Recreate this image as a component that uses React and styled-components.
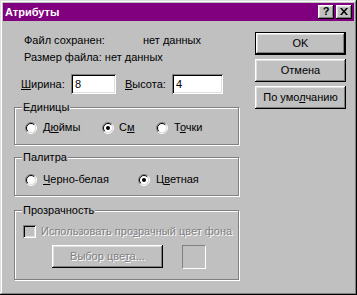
import React from "react";
import styled, { createGlobalStyle } from "styled-components";

const GlobalStyle = createGlobalStyle`
  html, body {
    margin: 0;
    padding: 0;
    background: #c0c0c0;
  }
`;

const raised = `
  box-shadow: inset -1px -1px #000, inset 1px 1px #fff,
    inset -2px -2px #808080, inset 2px 2px #dfdfdf;
`;

const Window = styled.div`
  box-sizing: border-box;
  width: 357px;
  height: 295px;
  padding: 3px;
  background: #c0c0c0;
  box-shadow: inset -1px -1px #000, inset 1px 1px #dfdfdf,
    inset -2px -2px #808080, inset 2px 2px #fff;
  display: flex;
  flex-direction: column;
  color: #000;
  font-family: "Liberation Sans", Arial, sans-serif;
  font-size: 11px;
  line-height: 13px;
`;

const TitleBar = styled.div`
  height: 18px;
  background: #800080;
  display: flex;
  align-items: center;
  gap: 2px;
  padding: 0 2px;
`;

const Title = styled.div`
  flex: 1;
  color: #fff;
  font-weight: bold;
`;

const CaptionButton = styled.div`
  box-sizing: border-box;
  width: 16px;
  height: 14px;
  background: #c0c0c0;
  ${raised}
  display: flex;
  align-items: center;
  justify-content: center;
  font-weight: bold;
  font-size: 11px;
  padding-bottom: 1px;
`;

const Body = styled.div`
  flex: 1;
  display: flex;
`;

const LeftCol = styled.div`
  width: 226px;
  margin-left: 11px;
  padding-top: 13px;
  display: flex;
  flex-direction: column;
`;

const RightCol = styled.div`
  width: 91px;
  margin-left: auto;
  margin-right: 8px;
  padding-top: 11px;
  display: flex;
  flex-direction: column;
  gap: 4px;
`;

const InfoRow = styled.div`
  display: flex;
  height: 13px;
  padding-left: 10px;
  margin-top: ${(p) => p.$top || 0}px;
  white-space: nowrap;
`;

const InfoLabel = styled.span`
  width: 119px;
`;

const SizeRow = styled.div`
  display: flex;
  align-items: center;
  height: 20px;
  margin-top: 10px;
  padding-left: 7px;
`;

const FieldLabel = styled.span`
  width: ${(p) => p.$w}px;
  margin-left: ${(p) => p.$ml || 0}px;
`;

const TextBox = styled.div`
  box-sizing: border-box;
  width: ${(p) => p.$w}px;
  height: 20px;
  padding-left: 4px;
  background: #fff;
  display: flex;
  align-items: center;
  box-shadow: inset 1px 1px #808080, inset -1px -1px #fff,
    inset 2px 2px #000, inset -2px -2px #dfdfdf;
`;

const Hot = styled.span`
  text-decoration: underline;
  text-underline-offset: 1px;
`;

const Group = styled.div`
  box-sizing: border-box;
  width: 225px;
  height: ${(p) => p.$h}px;
  margin-top: ${(p) => p.$top}px;
  border: 1px solid #808080;
  box-shadow: inset 1px 1px #fff, 1px 1px #fff;
  display: flex;
  flex-direction: column;
`;

const Legend = styled.span`
  align-self: flex-start;
  margin: -7px 0 0 7px;
  padding: 0 1px;
  background: #c0c0c0;
  line-height: 13px;
`;

const OptionRow = styled.div`
  display: flex;
  align-items: center;
  height: 13px;
  margin-top: ${(p) => p.$top}px;
  padding-left: ${(p) => p.$left || 10}px;
  white-space: nowrap;
`;

const Option = styled.label`
  display: flex;
  align-items: center;
  gap: ${(p) => p.$gap || 6}px;
  width: ${(p) => (p.$w ? `${p.$w}px` : "auto")};
  color: ${(p) => (p.$disabled ? "#808080" : "#000")};
  text-shadow: ${(p) => (p.$disabled ? "1px 1px 0 #fff" : "none")};
`;

const CheckBox = styled.span`
  box-sizing: border-box;
  width: 13px;
  height: 13px;
  background: #c0c0c0;
  box-shadow: inset 1px 1px #808080, inset -1px -1px #fff,
    inset 2px 2px #000, inset -2px -2px #dfdfdf;
`;

const ButtonRow = styled.div`
  display: flex;
  align-items: flex-start;
  gap: 19px;
  margin-top: 7px;
  padding-left: 37px;
`;

const Button = styled.div`
  box-sizing: border-box;
  width: ${(p) => p.$w || 91}px;
  height: 23px;
  background: #c0c0c0;
  display: flex;
  align-items: center;
  justify-content: center;
  white-space: nowrap;
  border: ${(p) => (p.$default ? "1px solid #000" : "none")};
  ${raised}
  color: ${(p) => (p.$disabled ? "#808080" : "#000")};
  text-shadow: ${(p) => (p.$disabled ? "1px 1px 0 #fff" : "none")};
`;

const ColorWell = styled.div`
  box-sizing: border-box;
  width: 24px;
  height: 24px;
  border: 1px solid;
  border-color: #808080 #fff #fff #808080;
`;

const Radio = ({ checked }) => (
  <svg width="12" height="12" viewBox="0 0 12 12">
    <circle cx="6" cy="6" r="4.5" fill="#fff" />
    <path d="M2.1 9.9 A5.5 5.5 0 0 1 9.9 2.1" fill="none" stroke="#808080" />
    <path d="M9.9 2.1 A5.5 5.5 0 0 1 2.1 9.9" fill="none" stroke="#fff" />
    <path d="M2.8 9.2 A4.5 4.5 0 0 1 9.2 2.8" fill="none" stroke="#000" />
    <path d="M9.2 2.8 A4.5 4.5 0 0 1 2.8 9.2" fill="none" stroke="#dfdfdf" />
    {checked && <circle cx="6" cy="6" r="2" fill="#000" />}
  </svg>
);

const CloseGlyph = () => (
  <svg width="8" height="7" viewBox="0 0 8 7">
    <path d="M0 0h2l2 2.5L6 0h2L5 3.5 8 7H6L4 4.5 2 7H0l3-3.5z" fill="#000" />
  </svg>
);

export default function App() {
  return (
    <>
      <GlobalStyle />
      <Window>
        <TitleBar>
          <Title>Атрибуты</Title>
          <CaptionButton>?</CaptionButton>
          <CaptionButton>
            <CloseGlyph />
          </CaptionButton>
        </TitleBar>
        <Body>
          <LeftCol>
            <InfoRow>
              <InfoLabel>Файл сохранен:</InfoLabel>
              <span>нет данных</span>
            </InfoRow>
            <InfoRow $top={4}>Размер файла: нет данных</InfoRow>
            <SizeRow>
              <FieldLabel $w={50}>
                <Hot>Ш</Hot>ирина:
              </FieldLabel>
              <TextBox $w={45}>8</TextBox>
              <FieldLabel $w={47} $ml={9}>
                <Hot>В</Hot>ысота:
              </FieldLabel>
              <TextBox $w={51}>4</TextBox>
            </SizeRow>

            <Group $h={38} $top={13}>
              <Legend>Единицы</Legend>
              <OptionRow $top={7}>
                <Option $w={77}>
                  <Radio />
                  <span>
                    Д<Hot>ю</Hot>ймы
                  </span>
                </Option>
                <Option $w={54} $gap={5}>
                  <Radio checked />
                  <span>
                    С<Hot>м</Hot>
                  </span>
                </Option>
                <Option>
                  <Radio />
                  <span>
                    Т<Hot>о</Hot>чки
                  </span>
                </Option>
              </OptionRow>
            </Group>

            <Group $h={39} $top={12}>
              <Legend>Палитра</Legend>
              <OptionRow $top={9}>
                <Option $w={113}>
                  <Radio />
                  <span>
                    <Hot>Ч</Hot>ерно-белая
                  </span>
                </Option>
                <Option>
                  <Radio checked />
                  <span>
                    Ц<Hot>в</Hot>етная
                  </span>
                </Option>
              </OptionRow>
            </Group>

            <Group $h={70} $top={14}>
              <Legend>Прозрачность</Legend>
              <OptionRow $top={8} $left={8}>
                <Option $gap={5} $disabled>
                  <CheckBox />
                  <span>
                    Использовать про<Hot>з</Hot>рачный цвет фона
                  </span>
                </Option>
              </OptionRow>
              <ButtonRow>
                <Button $w={111} $disabled>
                  <span>
                    Выбор цве<Hot>т</Hot>а...
                  </span>
                </Button>
                <ColorWell />
              </ButtonRow>
            </Group>
          </LeftCol>

          <RightCol>
            <Button $default>OK</Button>
            <Button>Отмена</Button>
            <Button>
              <span>
                По умо<Hot>л</Hot>чанию
              </span>
            </Button>
          </RightCol>
        </Body>
      </Window>
    </>
  );
}
